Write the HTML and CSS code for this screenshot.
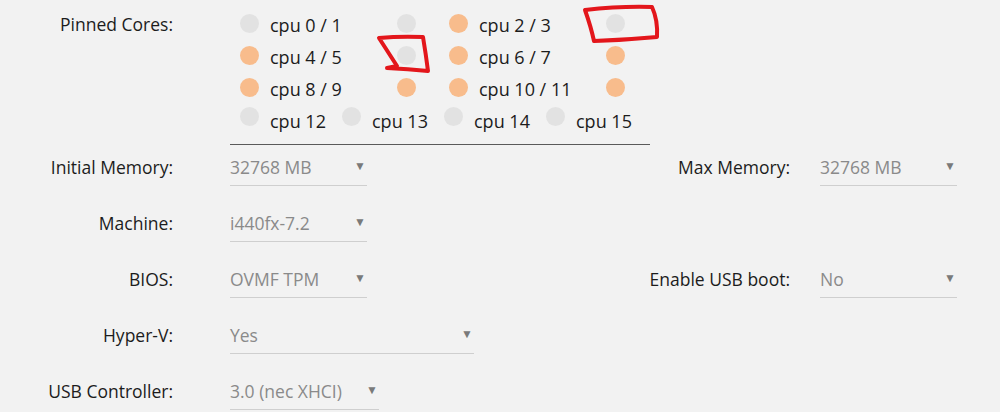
FILE: index.html
```html
<!DOCTYPE html>
<html>
<head>
<meta charset="utf-8">
<link rel="stylesheet" href="styles.css">
</head>
<body>
<div class="page">
  <div class="row cores-row">
    <div class="label">Pinned Cores:</div>
    <div class="cores">
      <div class="cpu-row">
        <div class="pair"><span class="dot"></span><span class="cpu-label">cpu 0 / 1</span><span class="dot"></span></div>
        <div class="pair"><span class="dot on"></span><span class="cpu-label">cpu 2 / 3</span><span class="dot"></span></div>
      </div>
      <div class="cpu-row">
        <div class="pair"><span class="dot on"></span><span class="cpu-label">cpu 4 / 5</span><span class="dot"></span></div>
        <div class="pair"><span class="dot on"></span><span class="cpu-label">cpu 6 / 7</span><span class="dot on"></span></div>
      </div>
      <div class="cpu-row">
        <div class="pair"><span class="dot on"></span><span class="cpu-label">cpu 8 / 9</span><span class="dot on"></span></div>
        <div class="pair"><span class="dot on"></span><span class="cpu-label">cpu 10 / 11</span><span class="dot on"></span></div>
      </div>
      <div class="cpu-row singles">
        <div class="single"><span class="dot"></span><span class="cpu-label">cpu 12</span></div>
        <div class="single"><span class="dot"></span><span class="cpu-label">cpu 13</span></div>
        <div class="single"><span class="dot"></span><span class="cpu-label">cpu 14</span></div>
        <div class="single"><span class="dot"></span><span class="cpu-label">cpu 15</span></div>
      </div>
    </div>
  </div>

  <div class="row">
    <div class="field">
      <div class="label">Initial Memory:</div>
      <div class="select w137"><span class="val">32768 MB</span><span class="arrow">▼</span></div>
    </div>
    <div class="field right">
      <div class="label">Max Memory:</div>
      <div class="select w137"><span class="val">32768 MB</span><span class="arrow">▼</span></div>
    </div>
  </div>

  <div class="row">
    <div class="field">
      <div class="label">Machine:</div>
      <div class="select w137"><span class="val">i440fx-7.2</span><span class="arrow">▼</span></div>
    </div>
  </div>

  <div class="row">
    <div class="field">
      <div class="label">BIOS:</div>
      <div class="select w137"><span class="val">OVMF TPM</span><span class="arrow">▼</span></div>
    </div>
    <div class="field right">
      <div class="label">Enable USB boot:</div>
      <div class="select w137"><span class="val">No</span><span class="arrow">▼</span></div>
    </div>
  </div>

  <div class="row">
    <div class="field">
      <div class="label">Hyper-V:</div>
      <div class="select w244"><span class="val">Yes</span><span class="arrow">▼</span></div>
    </div>
  </div>

  <div class="row">
    <div class="field">
      <div class="label">USB Controller:</div>
      <div class="select w149"><span class="val">3.0 (nec XHCI)</span><span class="arrow">▼</span></div>
    </div>
  </div>

  <svg class="marks" width="1000" height="412" viewBox="0 0 1000 412">
    <path d="M585,10 Q620,6 652,7 Q658,20 657,37 Q625,40 594,41 Q591,27 585,10 Z" />
    <path d="M379,38 Q400,36 423,37 Q426,55 428,71 Q408,69 387,68 L397,66 Q388,52 379,38 Z" />
  </svg>
</div>
</body>
</html>
```

FILE: styles.css
```css
html, body {
  margin: 0;
  padding: 0;
  background: #f2f2f2;
}

.page {
  position: relative;
  width: 1000px;
  height: 412px;
  overflow: hidden;
  font-family: "Open Sans", "Noto Sans", sans-serif;
  font-size: 17.5px;
  color: #1c1c1c;
}

.row {
  display: flex;
  height: 56px;
  align-items: flex-start;
}

.cores-row {
  height: auto;
  margin-bottom: 4px;
}

.label {
  width: 173px;
  margin-right: 57px;
  text-align: right;
  height: 37px;
  line-height: 37px;
  flex: none;
  white-space: nowrap;
}

.cores-row .label {
  height: auto;
  line-height: 32px;
  margin-top: 8px;
}

.cores {
  width: 420px;
  padding-top: 9px;
  padding-bottom: 7px;
  border-bottom: 1px solid #5a5a5a;
}

.cpu-row {
  display: flex;
  height: 32px;
  align-items: center;
  padding-left: 10px;
}

.pair {
  display: flex;
  align-items: center;
  margin-right: 33px;
}

.single {
  display: flex;
  align-items: center;
  width: 102px;
}

.dot {
  width: 19px;
  height: 19px;
  border-radius: 50%;
  background: #e2e2e2;
  flex: none;
  margin-bottom: 4px;
}

.dot.on {
  background: #f8bc8c;
}

.singles .dot {
  margin-bottom: 10px;
}

.cpu-label {
  margin-left: 11px;
  white-space: nowrap;
  font-size: 18px;
}

.pair .cpu-label {
  width: 127px;
}

.field {
  display: flex;
  width: 600px;
}

.field.right {
  width: 400px;
}

.field.right .label {
  width: 190px;
  margin-right: 30px;
}

.select {
  display: flex;
  justify-content: space-between;
  align-items: center;
  height: 36px;
  border-bottom: 1px solid #cfcfcf;
  color: #8a8a8a;
  box-sizing: content-box;
}

.select .val {
  white-space: nowrap;
}

.select .arrow {
  font-size: 12px;
  color: #7a7a7a;
  padding-right: 1px;
  margin-bottom: 4px;
}

.w137 { width: 137px; }
.w244 { width: 244px; }
.w149 { width: 149px; }

.marks {
  position: absolute;
  left: 0;
  top: 0;
  pointer-events: none;
}

.marks path {
  fill: none;
  stroke: #e3161b;
  stroke-width: 4;
  stroke-linejoin: round;
  stroke-linecap: round;
}
```
